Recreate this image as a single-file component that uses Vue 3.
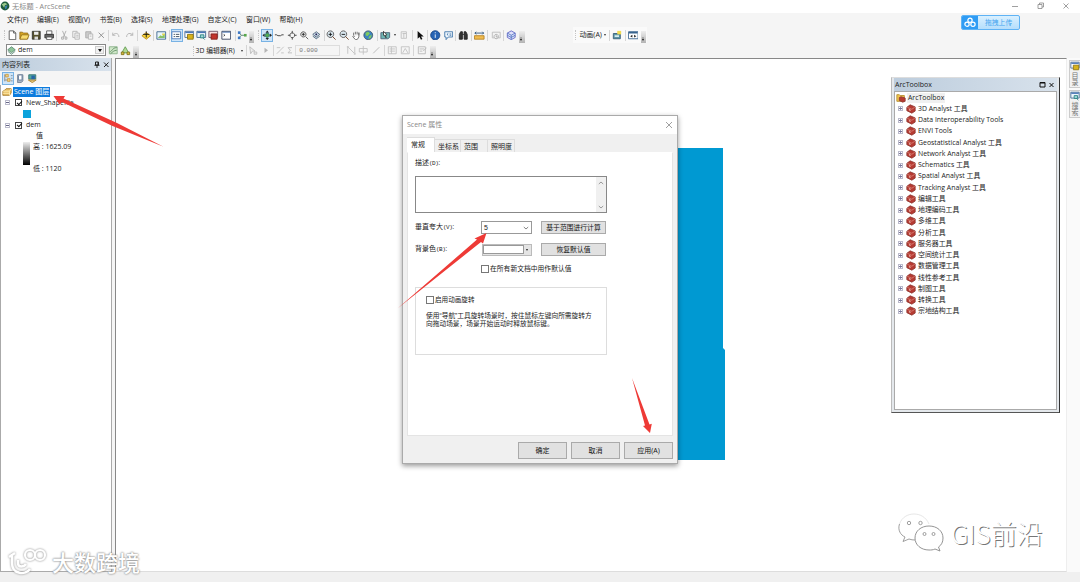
<script setup>
import { ref } from 'vue'

const menus = [
  { text: '文件(F)', w: 30 },
  { text: '编辑(E)', w: 31 },
  { text: '视图(V)', w: 31.5 },
  { text: '书签(B)', w: 31.5 },
  { text: '选择(S)', w: 31 },
  { text: '地理处理(G)', w: 45.5 },
  { text: '自定义(C)', w: 38.5 },
  { text: '窗口(W)', w: 33.5 },
  { text: '帮助(H)', w: 30 },
]

// 图标：每项为 [路径, 填充, 描边]
const icons = {
  new: [['M2.5 1h5l2.500 2.500V11h-7.500z', '#fff', '#555'], ['M7.500 1v2.500h2.500', 'none', '#555']],
  open: [['M1 2.500h3l1 1h5V10H1z', '#d9a520', '#94701c'], ['M3 5.500h8.500L9.500 10.500H1z', '#f8dc70', '#94701c']],
  save: [['M1.5 1.500h9v9h-9z', '#55502c', '#333'], ['M3.500 2h5v3.500h-5z', '#eee', 'none'], ['M4 7.500h4V11H4z', '#ddd', 'none']],
  print: [['M3 1h6v4H3z', '#fff', '#555'], ['M1 5h10v4H1z', '#666', '#333'], ['M3 8h6v3H3z', '#fff', '#555']],
  cut: [['M4 1l3 7M8 1L5 8', 'none', '#aaa'], ['M3 8h2v2.500H3zM7 8h2v2.500H7z', 'none', '#aaa']],
  copy: [['M2 1.500h5v7H2z', '#f4f4f4', '#b5b5b5'], ['M4.500 3.500h5v7h-5zM6 6h2.500M6 8h2.500', '#f4f4f4', '#b5b5b5']],
  paste: [['M2 2h6v7H2z', '#ccc', '#aaa'], ['M5 4.500h5v6H5zM6.500 7h2', '#f4f4f4', '#b5b5b5']],
  del: [['M3 3l6 6M9 3L3 9', 'none', '#888']],
  undo: [['M2 3v3h3M2 6c2-3 7-3 7 2', 'none', '#b0b0b0']],
  redo: [['M10 3v3H7M10 6c-2-3-7-3-7 2', 'none', '#b0b0b0']],
  add: [['M6 3l5 3.500L6 10.500 1 6.500z', '#f7d43c', '#b98c18'], ['M6 1.500v7M2.500 5h7', 'none', '#111']],
  chart: [['M1 2h10v8.500H1z', '#e9f6fb', '#39648e'], ['M2 9l3-3 2 1 3-3v5z', '#86c06a', 'none'], ['M7 4h3v2H7z', '#e6d54a', 'none']],
  toc: [['M1 2h10v8H1z', '#fff', '#4a76b8'], ['M3 5h1.500M3 7.500h1.500M5.500 5h4M5.500 7.500h4', 'none', '#345']],
  catalog: [['M1 1.500h10v7H1z', '#fff', '#4a6a94'], ['M1.500 2h9v1.500h-9z', '#4a76b8', 'none'], ['M4 5h6.500v5.500H4z', '#d8b21c', '#8d7410']],
  search: [['M1 1.500h10v7H1z', '#eef6fc', '#39648e'], ['M1.500 2h9v1.500h-9z', '#4a76b8', 'none'], ['M5 5.500h4v3.500H5z', '#9cd6d6', '#28807f'], ['M8 9l2 2', 'none', '#28807f']],
  toolbox: [['M1 1.500h10v7H1z', '#f4dfdf', '#6d5064'], ['M3.500 4.500h7v6h-7z', '#c2332c', '#82201b']],
  python: [['M1 1.500h10v9H1z', '#fff', '#333e58'], ['M1.500 2.500h9', 'none', '#4a76b8'], ['M3 5l1.500 1L3 7', 'none', '#333']],
  model: [['M2 3l3 3-3 3M5 6h4', 'none', '#4b7a64'], ['M1 1.500h3v3H1z', '#3c77c4', 'none'], ['M1 7.500h3v3H1z', '#3c77c4', 'none'], ['M8 4.500h3v3H8z', '#57a64c', 'none']],
  navigate: [['M6 .5L8 3H4zM6 11.500L8 9H4zM.5 6L3 4v4zM11.500 6L9 4v4z', '#222', 'none'], ['M6 3.500a2.500 2.500 0 1 0 .01 0z', '#57ab50', '#256a6f']],
  fly: [['M1 5.500h2l1.500 1h3l1.500-1h2', 'none', '#333']],
  center: [['M6 1v3M6 8v3M1 6h3M8 6h3', 'none', '#333'], ['M6 3.200a2.800 2.800 0 1 0 .01 0z', 'none', '#555']],
  zoomTo: [['M5 2a3 3 0 1 0 .01 0zM7.500 7.500L10.500 10.500', '#ddd', '#555'], ['M5 3.500v3M3.500 5h3', 'none', '#222']],
  observer: [['M2 5l4-3 4 3-4 3zM2 7l4 3 4-3', '#d5e4ef', '#4c6177'], ['M5 4h2v2H5z', '#225', 'none']],
  zoomIn: [['M5 1a3.800 3.800 0 1 0 .01 0z', '#d8e6ee', '#555'], ['M7.500 7.500L11 11', 'none', '#6b3d20'], ['M5 3v4M3 5h4', 'none', '#111']],
  zoomOut: [['M5 1a3.800 3.800 0 1 0 .01 0z', '#d8e6ee', '#555'], ['M7.500 7.500L11 11', 'none', '#6b3d20'], ['M3 5h4', 'none', '#111']],
  pan: [['M3 6V3M5 5V2M7 5V2M9 6V3v5l-2 3H5L2 7.500l1-1L4 8', '#fff', '#666']],
  globe: [['M6 1a5 5 0 1 0 .01 0z', '#3b83c4', '#3d5566'], ['M3 3l3-1 2 2-3 3-2-1zM7 7l3-2-1 4-3 1z', '#7fca5c', 'none']],
  select: [['M1 3h10v5.500L9 10H1z', '#6fb5b4', '#4c6177'], ['M4 1.500l4 4-2 .5 1 3-2-3H4z', '#fff', '#333']],
  clear: [['M2.500 2h6v7.500h-6zM4 4h4M5.500 4v5', '#f3f3f3', '#c0c0c0']],
  cursor: [['M3 1v9l2.200-2 1.600 3.200 1.700-.9-1.600-2.900H10z', '#111', 'none']],
  info: [['M6 .8a5.200 5.200 0 1 0 .01 0z', '#2764b4', '#174586'], ['M6 5v4M6 2.500v1.200', 'none', '#fff']],
  html: [['M2 2h9v6H6l-2.500 3V8H2z', '#f0f7fd', '#3b72a8'], ['M6 4L4.500 5 6 6M7.500 4.500h2M7.500 6h2', 'none', '#3b72a8']],
  find: [['M1.500 10.500V5L3 2h2v8.500zM10.500 10.500V5L9 2H7v8.500z', '#333', '#222'], ['M5 5h2', 'none', '#222']],
  measure: [['M.5 6.500h11v4H.5z', '#f0bc50', '#b58224'], ['M1 3.500h10M2.500 2L1 3.500 2.500 5M9.500 2L11 3.500 9.500 5', 'none', '#275079']],
  time: [['M1.500 2.500h9V9h-9z', '#f3f3f3', '#bbb'], ['M6 5a2.500 2.500 0 1 0 .01 0zM6 6v2h2', '#f3f3f3', '#aaa']],
  cube: [['M6 1l4.500 2.500v5L6 11 1.500 8.500v-5z', '#dfe0fa', '#6066c7'], ['M1.500 3.500L6 6l4.500-2.500M6 6v5M1.500 6L6 8.500 10.500 6', 'none', '#5579c4']],
  capture: [['M1.500 4h8v6h-8z', '#5b96a6', '#385d77'], ['M6 1h4.500v4H6z', '#f3db51', 'none'], ['M3 6h5v2H3z', '#d7edf0', 'none']],
  player: [['M.5 2h11v8H.5z', '#fff', '#39648e'], ['M1 2h10v2H1z', '#39648e', 'none'], ['M2.500 7L5 5.500v3zM9.500 7L7 5.500v3z', '#222', 'none']],
  surface: [['M1.500 2h9v8h-9z', '#cfe7c8', '#89b188'], ['M2 8c3-1 3-5 8-5M3 10c2-2 4-4 7-4', 'none', '#5f8b63']],
  node: [['M2 9l4-7 4 7z', '#b3d993', '#5f9b52'], ['M1.500 8h3v3h-3zM8 8h3v3H8z', '#d5bd3f', '#83731e']],
  layer: [['M6 1l5 4-5 4-5-4z', '#8fc49a', '#4c7d68'], ['M1 7l5 4 5-4', 'none', '#4c7d68']],
  edit: [['M2 2l6 5H5L3 10zM7 8h3v2.500H7z', '#eee', '#bbb']],
  place: [['M4 3l4 3-4 3z', '#b5b5b5', 'none']],
  sketch: [['M2 10L10 2M2 3h4M7 9h3', 'none', '#c0c0c0']],
  sigma: [['M8 3H3.500L6 6 3.500 9H8', 'none', '#bbb']],
  verts: [['M2 2v8M2 2l8 8M10 2v8', 'none', '#c0c0c0'], ['M1 1h2v2H1zM9 9h2v2H9z', '#ccc', 'none']],
  split: [['M6 1v10M1.500 4h9v4h-9z', 'none', '#c0c0c0']],
  slash: [['M2.500 9.500l7-7', 'none', '#b5b5b5']],
  attrs: [['M1.500 2h9v8h-9zM3 4.500h6M3 7h6M5 2v8', '#f5f5f5', '#c0c0c0']],
  sketchProps: [['M1.500 2h9v8h-9zM3 9l3-5 3 5', '#f5f5f5', '#c0c0c0']],
  template: [['M1.500 2h8v8h-8zM3 4.500h5M3 7h3M7 7l4-4', '#f5f5f5', '#b8b8b8']],
  dataList: [['M2 1.500v8M2 3h3M2 8h3', 'none', '#8a8a8a'], ['M3 1.500h3v3H3zM5 6.500h3v3H5z', '#f0d487', '#c99a45'], ['M9 3h2M9 6h2M9 9h2', 'none', '#789']],
  dataSource: [['M3 2h6v7l-2 2H3z', '#aab7c5', '#6d7d91'], ['M4 3c0-1 4-1 4 0v5H4z', '#fff', '#667b9b']],
  dataSee: [['M2 2h8v5H2z', '#52a8a0', '#38716e'], ['M5 3h4v4H5z', '#2766a7', 'none'], ['M1.500 8L6 11l4.500-3z', '#e6c779', '#a98637']],
  layers: [['M3 4l2-2h6v5L9 10H1V5z', '#e9bf66', '#a57926'], ['M1 5h8v5M9 5l2-3M1 7.500h8', 'none', '#fff0b8']],
  box: [['M1 4l4-3 6 2.500v5L7 11 1 8z', '#b63a32', '#8f3a34'], ['M1.500 4L7 6.300 10.500 4', 'none', '#d98378'], ['M3.500 6l2 1v1.500l-2-1z', '#ecc6be', 'none']],
  boxRoot: [['M1 2h3l1 1h5v7H1z', '#efc44d', '#b58a2c'], ['M4 5.500l2-1 5 1.500v4l-3 1-4-2z', '#b63a32', '#8f3a34']],
}

const i = (name, w = 12.3, on = false) => ({ type: 'icon', name, w, on })
const sep = (w = 3) => ({ type: 'sep', w })
const grip = (w = 4) => ({ type: 'grip', w })
const more = (w = 8) => ({ type: 'more', w })
const caret = (w = 6) => ({ type: 'caret', w })

const standardBar = [
  grip(), i('new'), i('open'), i('save'), i('print'), sep(),
  i('cut'), i('copy'), i('paste'), i('del'), sep(),
  i('undo'), i('redo'), sep(5), i('add'), sep(), i('chart'), sep(),
  i('toc', 12.3, true), i('catalog'), i('search'), i('toolbox'), i('python'), sep(6),
  i('model', 9), more(),
]
const toolsBar = [
  grip(6), i('navigate', 12.3, true), i('fly'), i('center'), i('zoomTo'), i('observer'), sep(),
  i('zoomIn'), i('zoomOut'), i('pan'), i('globe'), sep(5),
  i('select', 12), caret(), i('clear', 13), sep(), i('cursor'), sep(3.5),
  i('info'), i('html'), sep(3.4), i('find'), sep(3.7), i('measure'), sep(4), i('time'), sep(), i('cube'), more(),
]
const sketchBar = [
  i('verts'), i('split'), i('slash'), sep(4), i('attrs'), i('sketchProps', 13), sep(4), i('template', 13), more(),
]

const toolboxes = [
  '3D Analyst 工具',
  'Data Interoperability Tools',
  'ENVI Tools',
  'Geostatistical Analyst 工具',
  'Network Analyst 工具',
  'Schematics 工具',
  'Spatial Analyst 工具',
  'Tracking Analyst 工具',
  '编辑工具',
  '地理编码工具',
  '多维工具',
  '分析工具',
  '服务器工具',
  '空间统计工具',
  '数据管理工具',
  '线性参考工具',
  '制图工具',
  '转换工具',
  '宗地结构工具',
]

const tabs = [
  { text: '常规', w: 28 },
  { text: '坐标系', w: 26 },
  { text: '范围', w: 27 },
  { text: '照明度', w: 27 },
]
const activeTab = ref('常规')
const description = ref('')
</script>

<template>
  <div class="app">
    <header class="titleBar">
      <svg class="logo" viewBox="0 0 12 12">
        <circle cx="6" cy="6" r="5.3" fill="#1d5b3c" />
        <path d="M2 4l4-2 3 2-3 1-1 3z" fill="#9ac98c" />
        <path d="M6 6l3-1-1 4-2 1z" fill="#3a7fa8" />
      </svg>
      <span class="appName">无标题 - ArcScene</span>
      <svg class="winBtns" viewBox="0 0 62 10">
        <path d="M0 5.500h6M26 3.500h4v4h-4zM27.500 3.500V2h4v4H30M51.500 2.500l5 5M56.500 2.500l-5 5" fill="none" stroke="#888" stroke-width=".8" />
      </svg>
    </header>

    <nav class="menuBar">
      <span v-for="m in menus" :key="m.text" :style="{ width: m.w + 'px' }">{{ m.text }}</span>
    </nav>

    <div class="toolRow">
      <div class="bar">
        <span v-for="(t, n) in [...standardBar, ...toolsBar]" :key="n" class="tool" :class="[t.type, { on: t.on }]" :style="{ width: t.w + 'px' }">
          <svg v-if="t.type === 'icon'" viewBox="0 0 12 12">
            <path v-for="(p, k) in icons[t.name]" :key="k" :d="p[0]" :fill="p[1]" :stroke="p[2]" />
          </svg>
        </span>
      </div>
      <div class="bar animBar">
        <span class="tool grip"></span>
        <span class="barText">动画(A)</span>
        <span class="tool caret"></span>
        <span class="tool sep"></span>
        <span class="tool icon"><svg viewBox="0 0 12 12"><path v-for="(p, k) in icons.capture" :key="k" :d="p[0]" :fill="p[1]" :stroke="p[2]" /></svg></span>
        <span class="tool sep"></span>
        <span class="tool icon"><svg viewBox="0 0 12 12"><path v-for="(p, k) in icons.player" :key="k" :d="p[0]" :fill="p[1]" :stroke="p[2]" /></svg></span>
        <span class="tool more"></span>
      </div>
    </div>

    <div class="toolRow second">
      <div class="layerCombo">
        <svg viewBox="0 0 12 12"><path v-for="(p, k) in icons.layer" :key="k" :d="p[0]" :fill="p[1]" :stroke="p[2]" /></svg>
        <span>dem</span>
        <i class="drop"></i>
      </div>
      <div class="bar layerTools">
        <span v-for="name in ['surface', 'node']" :key="name" class="tool icon">
          <svg viewBox="0 0 12 12">
            <path v-for="(p, k) in icons[name]" :key="k" :d="p[0]" :fill="p[1]" :stroke="p[2]" />
          </svg>
        </span>
        <span class="tool more"></span>
      </div>
      <div class="bar editBar">
        <span class="tool grip"></span>
        <span class="barText">3D 编辑器(R)</span>
        <span class="tool caret"></span>
        <span class="tool sep"></span>
        <span v-for="name in ['edit', 'place']" :key="name" class="tool icon">
          <svg viewBox="0 0 12 12">
            <path v-for="(p, k) in icons[name]" :key="k" :d="p[0]" :fill="p[1]" :stroke="p[2]" />
          </svg>
        </span>
        <span class="tool sep"></span>
        <span v-for="name in ['sketch', 'sigma']" :key="name" class="tool icon narrow">
          <svg viewBox="0 0 12 12">
            <path v-for="(p, k) in icons[name]" :key="k" :d="p[0]" :fill="p[1]" :stroke="p[2]" />
          </svg>
        </span>
        <span class="height">0.000</span>
        <span v-for="(t, n) in sketchBar" :key="n" class="tool" :class="t.type" :style="{ width: t.w + 'px' }">
          <svg v-if="t.type === 'icon'" viewBox="0 0 12 12">
            <path v-for="(p, k) in icons[t.name]" :key="k" :d="p[0]" :fill="p[1]" :stroke="p[2]" />
          </svg>
        </span>
      </div>
    </div>

    <main class="work">
      <aside class="toc">
        <div class="panelTitle">
          <span>内容列表</span>
          <svg viewBox="0 0 16 8">
            <path d="M2.500 1h3v3h-3zM1.500 4.300h5M4 4.300V7M5 1v3M11 1.500l4.500 4.500M15.500 1.500L11 6" fill="none" stroke="#222" />
          </svg>
        </div>
        <div class="tocTools">
          <span v-for="(name, n) in ['dataList', 'dataSource', 'dataSee']" :key="name" class="tool icon" :class="{ on: n === 0 }">
            <svg viewBox="0 0 12 12">
              <path v-for="(p, k) in icons[name]" :key="k" :d="p[0]" :fill="p[1]" :stroke="p[2]" />
            </svg>
          </span>
        </div>
        <div class="tree">
          <div class="node root">
            <svg viewBox="0 0 12 12"><path v-for="(p, k) in icons.layers" :key="k" :d="p[0]" :fill="p[1]" :stroke="p[2]" /></svg>
            <span class="selected">Scene 图层</span>
          </div>
          <div class="node"><i class="expand minus"></i><i class="check"></i><span>New_Shapefile</span></div>
          <div class="node"><i class="swatch"></i></div>
          <div class="node"><i class="expand minus"></i><i class="check"></i><span>dem</span></div>
          <div class="node value">值</div>
          <div class="ramp">
            <i></i>
            <div><span>高 : 1625.09</span><span>低 : 1120</span></div>
          </div>
        </div>
      </aside>

      <section class="scene">
        <svg class="surface" viewBox="0 0 48 312">
          <path d="M0 0h46v200l2 2v110H0z" fill="#0099d2" />
        </svg>
      </section>

      <aside class="dock">
        <div v-for="d in [{ icon: 'catalog', text: '目录' }, { icon: 'search', text: '搜索' }]" :key="d.text" class="dockTab">
          <svg viewBox="0 0 12 12">
            <path v-for="(p, k) in icons[d.icon]" :key="k" :d="p[0]" :fill="p[1]" :stroke="p[2]" />
          </svg>
          <span>{{ d.text }}</span>
        </div>
      </aside>
    </main>

    <footer class="status"></footer>

    <!-- 上传悬浮按钮 -->
    <div class="upload">
      <svg viewBox="0 0 17 14">
        <g fill="none" stroke="#fff" stroke-width="1.300">
          <circle cx="8.500" cy="4.500" r="2.300" />
          <circle cx="5.300" cy="8.800" r="2.300" />
          <circle cx="11.700" cy="8.800" r="2.300" />
        </g>
      </svg>
      <span>拖拽上传</span>
    </div>

    <!-- ArcToolbox -->
    <section class="toolboxWin">
      <div class="panelTitle">
        <span>ArcToolbox</span>
        <svg viewBox="0 0 16 8">
          <path d="M1 1.500h5v4.500H1zM1 2h5M10.500 2l4 4M14.500 2l-4 4" fill="none" stroke="#111" />
        </svg>
      </div>
      <div class="boxList">
        <div class="boxItem rootItem">
          <svg viewBox="0 0 12 12"><path v-for="(p, k) in icons.boxRoot" :key="k" :d="p[0]" :fill="p[1]" :stroke="p[2]" /></svg>
          <span>ArcToolbox</span>
        </div>
        <div v-for="t in toolboxes" :key="t" class="boxItem">
          <i class="expand"></i>
          <svg viewBox="0 0 12 12"><path v-for="(p, k) in icons.box" :key="k" :d="p[0]" :fill="p[1]" :stroke="p[2]" /></svg>
          <span>{{ t }}</span>
        </div>
      </div>
    </section>

    <!-- Scene 属性 -->
    <section class="dialog">
      <div class="dlgTitle">
        <span>Scene 属性</span>
        <svg viewBox="0 0 8 8"><path d="M1 1l6 6M7 1L1 7" fill="none" stroke="#888" stroke-width=".8" /></svg>
      </div>
      <div class="tabs">
        <span v-for="t in tabs" :key="t.text" :class="{ active: t.text === activeTab }" :style="{ width: t.w + 'px' }" @click="activeTab = t.text">{{ t.text }}</span>
      </div>
      <div class="pane">
        <label class="descLabel">描述<small>(D)</small>:</label>
        <div class="descBox">
          <textarea v-model="description"></textarea>
          <div class="scroll">
            <svg viewBox="0 0 6 4"><path d="M.8 3L3 1l2.200 2" fill="none" stroke="#999" /></svg>
            <svg viewBox="0 0 6 4"><path d="M.8 1L3 3l2.200-2" fill="none" stroke="#999" /></svg>
          </div>
        </div>
        <div class="field">
          <label>垂直夸大<small>(V)</small>:</label>
          <div class="select">
            <span>5</span>
            <svg viewBox="0 0 6 4"><path d="M.8 1L3 3l2.200-2" fill="none" stroke="#666" stroke-width=".8" /></svg>
          </div>
          <button>基于范围进行计算</button>
        </div>
        <div class="field">
          <label>背景色<small>(B)</small>:</label>
          <div class="color"><i></i><b></b></div>
          <button>恢复默认值</button>
        </div>
        <div class="checkRow defaultRow"><i></i>在所有新文档中用作默认值</div>
        <div class="group">
          <div class="checkRow"><i></i>启用动画旋转</div>
          <p>使用“导航”工具旋转场景时，按住鼠标左键向所需旋转方<br />向拖动场景，场景开始运动时释放鼠标键。</p>
        </div>
      </div>
      <div class="actions">
        <button>确定</button>
        <button>取消</button>
        <button>应用(A)</button>
      </div>
    </section>

    <!-- 标注箭头 -->
    <svg class="arrows" viewBox="0 0 1080 582">
      <g fill="#ee3a36">
        <path d="M53.500 96L65 96l-1.500 2.500L117 123l46.500 23.800L112 125.800 62 102l-2.500 2.500z" />
        <path d="M486.500 233l-3.500 10.500-2-1.500L397.500 308.500l79.500-69-2.500-1z" />
        <path d="M650 433l-7-7 2-.5-13-47.500 17.500 46.500 2.300-.7z" />
      </g>
    </svg>

    <div class="mark markLeft">
      <svg viewBox="0 0 40 28">
        <path d="M4 6v9c0 12 14 12 18 6M1 9l6-4M10 12v3c0 5 6 4 8 1" fill="none" stroke="#fff" stroke-width="2.500" />
        <circle cx="22" cy="7" r="5" fill="none" stroke="#fff" stroke-width="2.200" />
        <circle cx="32" cy="7" r="5" fill="none" stroke="#fff" stroke-width="2.200" />
      </svg>
      <span>大数跨境</span>
    </div>

    <div class="mark markRight">
      <svg viewBox="0 0 46 40">
        <path d="M16 1C7 1 1 7 1 14c0 4 2 8 6 10l-2 5 6-3c2 .8 4 1 7 1h14V13C30 6 25 1 16 1z" fill="#fff" />
        <path d="M1.500 11c-2 6 1 11 5.500 13l-2 4.500 6-2.500c2 .8 4 1 6 1" fill="none" stroke="#888" stroke-width=".8" />
        <path d="M1.500 11C4 4 10 1 16 1s12 3 15 10" fill="none" stroke="#d5d5d5" stroke-width=".6" />
        <path d="M31 13c-8 0-14 5-14 12s6 12 14 12c2 0 4 0 6-1l5 2-1.500-4c3-2 4.500-5 4.500-9 0-7-6-12-14-12z" fill="#fff" stroke="#888" stroke-width=".9" />
        <g fill="#fff" stroke="#888" stroke-width=".8">
          <circle cx="11" cy="10" r="1.700" /><circle cx="22.500" cy="10" r="1.700" />
          <circle cx="26.500" cy="21" r="1.500" /><circle cx="35.500" cy="21" r="1.500" />
        </g>
      </svg>
      <span>GIS前沿</span>
    </div>
  </div>
</template>

<style>
body {
  background: #fff;
  overflow: hidden;
}
</style>

<style scoped>
.app {
  position: relative;
  width: 1080px;
  height: 582px;
  display: flex;
  flex-direction: column;
  overflow: hidden;
  background: #f5f5f5;
  font-family: 'Open Sans', 'Noto Sans CJK SC', sans-serif;
  font-size: 7px;
  line-height: 10px;
  color: #222;
  white-space: nowrap;
}

.app *,
.app {
  box-sizing: border-box;
}

i {
  display: block;
  flex: none;
}

svg {
  display: block;
  flex: none;
}

.titleBar {
  display: flex;
  align-items: center;
  height: 13px;
  padding-bottom: 1px;
  background: #fff;
  color: #888;
}

.logo {
  width: 10px;
  height: 10px;
  margin-right: 2px;
}

.appName {
  font-size: 7.2px;
}

.winBtns {
  width: 62px;
  height: 10px;
  margin-left: auto;
  margin-right: 6px;
}

.menuBar {
  display: flex;
  align-items: center;
  height: 14px;
  padding-left: 7px;
  font-size: 6.9px;
}

.toolRow {
  display: flex;
  height: 16px;
  padding-left: 2px;
}

.toolRow.second {
  height: 15px;
}

.bar {
  display: flex;
  align-items: center;
}

.tool {
  display: flex;
  flex: none;
  align-items: center;
  justify-content: center;
}

.tool.icon {
  width: 12.3px;
  height: 13px;
}

.tool.icon svg {
  width: 10.5px;
  height: 10.5px;
}

.tool.on {
  background: #cfe5f8;
  border: 1px solid #78b2e4;
}

.tool.grip {
  width: 4px;
}

.tool.grip::before {
  content: '';
  height: 10px;
  border-left: 1px dotted #c5c5c5;
}

.tool.sep {
  width: 3px;
}

.tool.sep::before {
  content: '';
  width: 1px;
  height: 11px;
  background: #d5d5d5;
}

.tool.more {
  align-self: flex-end;
  width: 8px;
  height: 12px;
  align-items: flex-end;
  padding-bottom: 2px;
}

.tool.more::before {
  content: '';
  width: 5.5px;
  height: 12px;
  margin-bottom: -2px;
  background: linear-gradient(#eee, #b4b4b4);
}

.tool.more::after {
  content: '';
  width: 0;
  margin-left: -4.2px;
  margin-right: 1.2px;
  border: 1.5px solid transparent;
  border-top: 2px solid #111;
  border-bottom: 0;
  box-shadow: 0 -2px 0 -0.5px #333;
}

.tool.caret {
  width: 6px;
}

.tool.caret::before {
  content: '';
  border: 1.5px solid transparent;
  border-top: 2px solid #333;
  border-bottom: 0;
}

.animBar {
  margin-left: 48px;
  background: #fafafa;
}

.animBar .barText {
  width: 25px;
  padding-left: 2px;
}

.layerCombo {
  display: flex;
  align-items: center;
  width: 100px;
  height: 12px;
  margin: 1px 0 0 4px;
  background: #fff;
  border: 1px solid #888;
}

.layerCombo svg {
  width: 9px;
  height: 9px;
}

.layerCombo span {
  margin-left: 2px;
}

.drop {
  width: 9px;
  height: 8px;
  margin-left: auto;
  margin-right: 1px;
  padding: 3px 2.5px;
  background: #f0f0f0;
  border: 1px solid #ccc;
}

.drop::before {
  content: '';
  display: block;
  width: 0;
  margin: -1px 0 0 -1px;
  border: 2px solid transparent;
  border-top: 3px solid #111;
  border-bottom: 0;
}

.layerTools {
  margin-left: 1px;
}

.editBar {
  margin-left: 52px;
}

.editBar .barText {
  width: 43px;
  font-size: 6.8px;
}

.editBar .tool.narrow {
  width: 10px;
}

.height {
  width: 45px;
  height: 11px;
  margin-right: 5px;
  padding-left: 3px;
  border: 1px solid #ddd;
  font-family: 'Liberation Mono', monospace;
  font-size: 6.2px;
  line-height: 9px;
  color: #777;
}

.work {
  display: flex;
  flex: 1;
  min-height: 0;
}

.toc {
  display: flex;
  flex-direction: column;
  width: 112px;
  margin-right: 3px;
  border-right: 1px solid #aaa;
}

.panelTitle {
  display: flex;
  align-items: center;
  height: 13px;
  padding: 0 2px;
  background: linear-gradient(90deg, #bdcddd, #d8e2ec);
}

.panelTitle svg {
  width: 16px;
  height: 8px;
  margin-left: auto;
}

.tocTools {
  display: flex;
  align-items: center;
  height: 14px;
  padding-left: 2px;
}

.tree {
  flex: 1;
  padding-top: 1px;
  background: #fff;
  border-left: 1px solid #aaa;
  border-bottom: 1px solid #aaa;
}

.node {
  display: flex;
  align-items: center;
  height: 11.2px;
}

.node.root svg {
  width: 10px;
  height: 10px;
  margin: 0 1px;
}

.selected {
  padding: 0 1px;
  background: #0c7bdd;
  color: #fff;
}

.expand {
  width: 5px;
  height: 5px;
  margin-left: 4px;
  border: 1px solid #bbc;
  background: linear-gradient(#779, #779) center / 3px 1px no-repeat, linear-gradient(#99b, #99b) center / 1px 3px no-repeat;
}

.expand.minus {
  background: linear-gradient(#668, #668) center / 3px 1px no-repeat;
}

.check {
  width: 7px;
  height: 7px;
  margin: 0 4px 0 5px;
  border: 1px solid #444;
}

.check::before {
  content: '';
  display: block;
  width: 4px;
  height: 2px;
  margin: 0.5px;
  border-left: 1px solid #111;
  border-bottom: 1px solid #111;
  transform: rotate(-45deg);
}

.swatch {
  width: 8px;
  height: 8px;
  margin-left: 22px;
  background: #0ca3dc;
}

.node.value {
  padding-left: 35px;
}

.ramp {
  display: flex;
  padding-left: 22px;
}

.ramp i {
  width: 7px;
  height: 23px;
  background: linear-gradient(#eee, #000);
}

.ramp div {
  display: flex;
  flex-direction: column;
  gap: 12px;
  margin-left: 3px;
}

.scene {
  flex: 1;
  padding: 89px 0 0 561px;
  background: #fff;
  border-top: 1px solid #888;
  border-left: 1px solid #888;
  border-right: 1px solid #eee;
  border-bottom: 1px solid #ddd;
}

.surface {
  width: 48px;
  height: 312px;
}

.dock {
  display: flex;
  flex-direction: column;
  gap: 2px;
  width: 13px;
  padding: 2px 0 0 2px;
  background: #fafafa;
}

.dockTab {
  display: flex;
  flex-direction: column;
  align-items: center;
  height: 28px;
  background: #f2f2f2;
  border: 1px solid #ccc;
  border-right: 0;
  color: #777;
}

.dockTab svg {
  width: 10px;
  height: 10px;
  margin-bottom: 1px;
}

.dockTab span {
  width: 7px;
  white-space: normal;
  line-height: 7px;
  word-break: break-all;
}

.status {
  height: 10px;
  background: #f0f0f0;
}

.upload {
  position: absolute;
  left: 961px;
  top: 15px;
  display: flex;
  width: 59px;
  height: 15px;
  background: linear-gradient(#d9f0ff, #b5defc);
  border: 1px solid #5fb3f5;
  border-radius: 2px;
  overflow: hidden;
  color: #45a4ee;
  line-height: 13px;
}

.upload svg {
  width: 16px;
  height: 13px;
  background: #2f9cf4;
}

.upload span {
  margin-left: 7px;
  font-size: 6.8px;
}

.toolboxWin {
  position: absolute;
  left: 891px;
  top: 77px;
  display: flex;
  flex-direction: column;
  width: 169px;
  height: 336px;
  padding: 0 2px 2px 2px;
  background: #e4e8ec;
  border-left: 1px solid #bbb;
  border-top: 1px solid #ddd;
  border-right: 1px solid #333;
  border-bottom: 1px solid #555;
}

.toolboxWin .panelTitle {
  padding-left: 1px;
}

.boxList {
  flex: 1;
  background: #fff;
  border: 1px solid #aaa;
}

.boxItem {
  display: flex;
  align-items: center;
  height: 11.26px;
  font-size: 6.9px;
}

.boxItem svg {
  width: 10px;
  height: 10px;
  margin: 0 2px 0 3px;
}

.boxItem.rootItem svg {
  margin: 0 1px 0 1px;
}

.rootItem span {
  padding: 0 1px;
  background: #f0f0f0;
}

.boxItem .expand {
  margin-left: 3px;
}

.dialog {
  position: absolute;
  left: 402px;
  top: 115px;
  display: flex;
  flex-direction: column;
  width: 276px;
  height: 349px;
  background: #f0f0f0;
  border: 1px solid #aaa;
  box-shadow: 0 2px 5px rgba(0, 0, 0, 0.4);
}

.dlgTitle {
  display: flex;
  align-items: center;
  height: 18px;
  padding: 0 4px;
  background: #fff;
  color: #888;
}

.dlgTitle svg {
  width: 8px;
  height: 8px;
  margin-left: auto;
}

.tabs {
  display: flex;
  align-items: flex-end;
  height: 18px;
  padding-left: 4px;
}

.tabs span {
  height: 13px;
  padding-left: 3px;
  line-height: 13px;
  border: 1px solid #ddd;
  border-left: 0;
  border-bottom: 0;
}

.tabs .active {
  height: 15px;
  padding-left: 4px;
  background: #fff;
}

.pane {
  display: flex;
  flex-direction: column;
  height: 284px;
  margin: 0 4px;
  padding: 5px 0 0 7px;
  background: #fff;
  border: 1px solid #e4e4e4;
  border-top-color: #fff;
  font-family: 'Liberation Sans', 'Noto Sans CJK SC', sans-serif;
}

small {
  font-family: 'Liberation Mono', monospace;
  font-size: 6px;
  letter-spacing: -0.5px;
}

.descLabel {
  height: 18px;
}

.descBox {
  display: flex;
  width: 192px;
  height: 37px;
  border: 1px solid #888;
}

.descBox textarea {
  flex: 1;
  padding: 0;
  border: 0;
  outline: 0;
  resize: none;
}

.scroll {
  display: flex;
  flex-direction: column;
  justify-content: space-between;
  align-items: center;
  width: 10px;
  padding: 4px 0 3px;
  background: #f0f0f0;
}

.scroll svg,
.select svg {
  width: 6px;
  height: 4px;
}

.field {
  display: flex;
  align-items: center;
  height: 13px;
  margin-top: 9px;
}

.descBox + .field {
  margin-top: 8px;
}

.field label {
  width: 66px;
}

.select {
  display: flex;
  align-items: center;
  justify-content: space-between;
  width: 51px;
  height: 13px;
  padding: 0 2px;
  border: 1px solid #999;
}

.color {
  display: flex;
  align-items: center;
  width: 50px;
  height: 12px;
  margin-left: 1px;
  background: #e4e4e4;
  border: 1px solid #bbb;
}

.color i {
  width: 41px;
  height: 9px;
  background: #fff;
  border: 1px solid #999;
}

.color b {
  margin-left: 2px;
  border: 1.5px solid transparent;
  border-top: 2px solid #222;
  border-bottom: 0;
}

button {
  padding: 0;
  background: #e1e1e1;
  border: 1px solid #aaa;
  color: #111;
  font: inherit;
}

.field button {
  width: 65px;
  height: 13px;
  margin-left: 9px;
  line-height: 10px;
  font-size: 6.8px;
}

.checkRow {
  display: flex;
  align-items: center;
  height: 9px;
}

.checkRow i {
  width: 8px;
  height: 8px;
  margin-right: 1px;
  background: #fff;
  border: 1px solid #777;
}

.defaultRow {
  margin: 8px 0 0 66px;
  font-size: 6.8px;
}

.group {
  width: 192px;
  height: 68px;
  margin-top: 14px;
  padding: 7px 0 0 10px;
  border: 1px solid #ddd;
}

.group .checkRow {
  font-size: 6.6px;
}

.group p {
  margin: 8px 0 0;
  line-height: 7.5px;
  font-size: 6.72px;
}

.actions {
  display: flex;
  justify-content: flex-end;
  gap: 4px;
  padding: 6px 4px 0;
}

.actions button {
  width: 49px;
  height: 17px;
}

.arrows {
  position: absolute;
  left: 0;
  top: 0;
  width: 1080px;
  height: 582px;
  pointer-events: none;
}

.mark {
  position: absolute;
  display: flex;
  align-items: center;
  color: #fff;
}

.markLeft {
  left: 8px;
  top: 547px;
  font-size: 22px;
  font-weight: 500;
  line-height: 30px;
  text-shadow: 0 0 2px #888, 0 0 2px #999;
}

.markLeft svg {
  width: 40px;
  height: 28px;
  margin-right: 4px;
  filter: drop-shadow(0 0 1px #888);
}

.markRight {
  left: 898px;
  top: 513px;
  font-size: 26px;
  font-weight: 300;
  font-family: 'Noto Sans CJK SC', sans-serif;
  line-height: 40px;
  text-shadow: 1px 1px 0.5px #777;
}

.markRight svg {
  width: 46px;
  height: 40px;
  margin-right: 7px;
}
</style>
